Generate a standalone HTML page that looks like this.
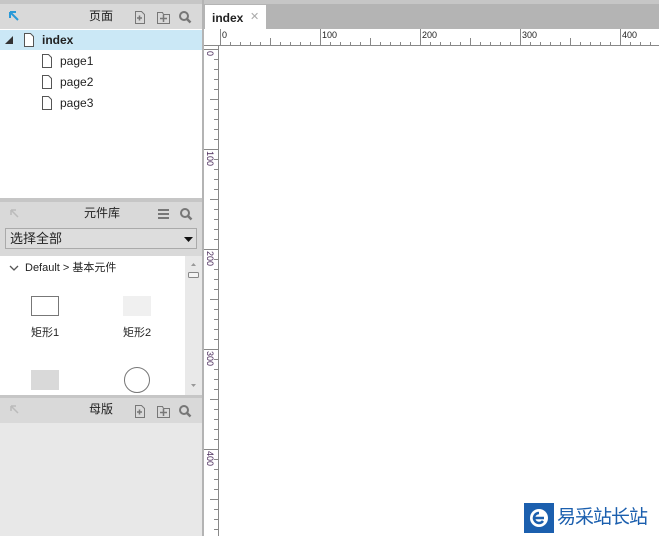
<!DOCTYPE html>
<html><head><meta charset="utf-8"><style>
*{margin:0;padding:0;box-sizing:border-box}
body{width:659px;height:536px;overflow:hidden;background:#fff;font-family:"Liberation Sans","Noto Sans CJK SC",sans-serif;font-size:12px;line-height:14px;color:#222;position:relative}
.a{position:absolute}
.hdr{background:#d9d9d9;height:25px}
.pg{position:absolute;font-size:12px}
</style></head><body>
<div class="a" style="left:0;top:0;width:659px;height:4px;background:#c6c6c6"></div>
<div class="a" style="left:0;top:4px;width:202px;height:532px;background:#fff"></div>
<div class="a hdr" style="left:0;top:4px;width:202px"></div>
<svg class="a" style="left:8px;top:10px" width="12" height="12"><path d="M2 2h6M2 2v6M2 2l8 8" stroke="#2a9ad8" stroke-width="2" fill="none"/></svg>
<div class="a" style="left:89px;top:9px;font-size:12px">页面</div>
<svg class="a" style="left:132px;top:9px" width="70" height="16">
<g stroke="#777" fill="none"><path d="M3.5 2.5h6l3 3v9h-9z"/><path d="M5 9h5M7.5 6.5v5" stroke-width="1.5"/>
<path d="M25.5 3.5h5l1 2h6v9h-12z"/><path d="M28 9.5h7M31.5 6v7" stroke-width="1.5"/>
<circle cx="52" cy="7" r="4" stroke-width="2"/><path d="M55 10l3.5 3.5" stroke-width="2.5"/></g></svg>
<div class="a" style="left:0;top:30px;width:202px;height:20px;background:#cbe8f6"></div>
<svg class="a" style="left:5px;top:35px" width="10" height="10"><path d="M8 1v8H0z" fill="#333"/></svg>
<svg class="a" style="left:23px;top:33px" width="12" height="14"><path d="M1.5 .5h6l3 3v10h-9z" fill="#fff" stroke="#555"/></svg>
<div class="a" style="left:42px;top:33px;font-size:12px;font-weight:bold">index</div>
<svg class="a" style="left:41px;top:54px" width="12" height="14"><path d="M1.5 .5h6l3 3v10h-9z" fill="#fff" stroke="#555"/></svg>
<div class="a pg" style="left:60px;top:54px">page1</div>
<svg class="a" style="left:41px;top:75px" width="12" height="14"><path d="M1.5 .5h6l3 3v10h-9z" fill="#fff" stroke="#555"/></svg>
<div class="a pg" style="left:60px;top:75px">page2</div>
<svg class="a" style="left:41px;top:96px" width="12" height="14"><path d="M1.5 .5h6l3 3v10h-9z" fill="#fff" stroke="#555"/></svg>
<div class="a pg" style="left:60px;top:96px">page3</div>
<div class="a" style="left:0;top:198px;width:202px;height:4px;background:#c6c6c6"></div>
<div class="a hdr" style="left:0;top:202px;width:202px;height:54px"></div>
<svg class="a" style="left:9px;top:208px" width="12" height="12"><path d="M2 2h5M2 2v5M2 2l7 7" stroke="#bbb" stroke-width="1.5" fill="none"/></svg>
<div class="a" style="left:84px;top:206px">元件库</div>
<svg class="a" style="left:155px;top:207px" width="40" height="16"><g stroke="#777" fill="none"><path d="M3 3h11M3 7h11M3 11h11" stroke-width="2"/><circle cx="30" cy="6" r="4" stroke-width="2"/><path d="M33 9l3.5 3.5" stroke-width="2.5"/></g></svg>
<div class="a" style="left:5px;top:228px;width:192px;height:21px;border:1px solid #aaa;background:#ddd"></div>
<div class="a" style="left:10px;top:231px;font-size:13px;line-height:15px">选择全部</div>
<svg class="a" style="left:184px;top:237px" width="9" height="6"><path d="M0 0h9L4.5 5z" fill="#111"/></svg>
<div class="a" style="left:0;top:256px;width:185px;height:140px;background:#fff"></div>
<div class="a" style="left:185px;top:256px;width:17px;height:140px;background:#e9e9e9"></div>
<svg class="a" style="left:188px;top:260px" width="11" height="130"><path d="M3 6l2.5-3 2.5 3z" fill="#999"/><rect x=".5" y="12.5" width="10" height="5" rx="1" fill="#f4f4f4" stroke="#888"/><path d="M3 124l2.5 3 2.5-3z" fill="#999"/></svg>
<svg class="a" style="left:9px;top:265px" width="10" height="8"><path d="M1 1l4 4 4-4" stroke="#555" stroke-width="1.3" fill="none"/></svg>
<div class="a" style="left:25px;top:261px;font-size:11px">Default &gt; 基本元件</div>
<div class="a" style="left:31px;top:296px;width:28px;height:20px;border:1px solid #777;background:#fff"></div>
<div class="a" style="left:123px;top:296px;width:28px;height:20px;background:#f0f0f0"></div>
<div class="a" style="left:31px;top:326px;font-size:11px">矩形1</div>
<div class="a" style="left:123px;top:326px;font-size:11px">矩形2</div>
<div class="a" style="left:31px;top:370px;width:28px;height:20px;background:#d9d9d9"></div>
<div class="a" style="left:124px;top:367px;width:26px;height:26px;border:1px solid #777;border-radius:50%;background:#fff"></div>
<div class="a" style="left:0;top:395px;width:202px;height:3px;background:#c6c6c6"></div>
<div class="a hdr" style="left:0;top:398px;width:202px"></div>
<svg class="a" style="left:9px;top:404px" width="12" height="12"><path d="M2 2h5M2 2v5M2 2l7 7" stroke="#bbb" stroke-width="1.5" fill="none"/></svg>
<div class="a" style="left:89px;top:402px">母版</div>
<svg class="a" style="left:132px;top:403px" width="70" height="16">
<g stroke="#777" fill="none"><path d="M3.5 2.5h6l3 3v9h-9z"/><path d="M5 9h5M7.5 6.5v5" stroke-width="1.5"/>
<path d="M25.5 3.5h5l1 2h6v9h-12z"/><path d="M28 9.5h7M31.5 6v7" stroke-width="1.5"/>
<circle cx="52" cy="7" r="4" stroke-width="2"/><path d="M55 10l3.5 3.5" stroke-width="2.5"/></g></svg>
<div class="a" style="left:0;top:423px;width:202px;height:113px;background:#e8e8e8"></div>
<div class="a" style="left:202px;top:0;width:2px;height:536px;background:#b4b4b4"></div>
<div class="a" style="left:204px;top:4px;width:455px;height:25px;background:#b4b4b4"></div>
<div class="a" style="left:205px;top:5px;width:61px;height:25px;background:#fff"></div>
<div class="a" style="left:212px;top:11px;font-size:12px;font-weight:bold;color:#222">index</div>
<div class="a" style="left:250px;top:10px;font-size:11px;color:#aaa">✕</div>
<svg class="a" style="left:204px;top:29px" width="455" height="507">
<rect x="0" y="0" width="455" height="17" fill="#fff"/>
<rect x="0" y="0" width="14" height="507" fill="#fff"/>
<g stroke="#888" stroke-width="1">
<path d="M0 16.5H455M14.5 17V507"/>
<path d="
M16.5 0v17M26.5 13v4M36.5 13v4M46.5 13v4M56.5 13v4M66.5 9v8M76.5 13v4M86.5 13v4M96.5 13v4M106.5 13v4
M116.5 0v17M126.5 13v4M136.5 13v4M146.5 13v4M156.5 13v4M166.5 9v8M176.5 13v4M186.5 13v4M196.5 13v4M206.5 13v4
M216.5 0v17M226.5 13v4M236.5 13v4M246.5 13v4M256.5 13v4M266.5 9v8M276.5 13v4M286.5 13v4M296.5 13v4M306.5 13v4
M316.5 0v17M326.5 13v4M336.5 13v4M346.5 13v4M356.5 13v4M366.5 9v8M376.5 13v4M386.5 13v4M396.5 13v4M406.5 13v4
M416.5 0v17M426.5 13v4M436.5 13v4M446.5 13v4"/>
<path d="
M0 20.5h14M10 30.5h4M10 40.5h4M10 50.5h4M10 60.5h4M6 70.5h8M10 80.5h4M10 90.5h4M10 100.5h4M10 110.5h4
M0 120.5h14M10 130.5h4M10 140.5h4M10 150.5h4M10 160.5h4M6 170.5h8M10 180.5h4M10 190.5h4M10 200.5h4M10 210.5h4
M0 220.5h14M10 230.5h4M10 240.5h4M10 250.5h4M10 260.5h4M6 270.5h8M10 280.5h4M10 290.5h4M10 300.5h4M10 310.5h4
M0 320.5h14M10 330.5h4M10 340.5h4M10 350.5h4M10 360.5h4M6 370.5h8M10 380.5h4M10 390.5h4M10 400.5h4M10 410.5h4
M0 420.5h14M10 430.5h4M10 440.5h4M10 450.5h4M10 460.5h4M6 470.5h8M10 480.5h4M10 490.5h4M10 500.5h4"/>
</g>
<g font-family="Liberation Sans" font-size="9" fill="#222">
<text x="18" y="9">0</text><text x="118" y="9">100</text><text x="218" y="9">200</text><text x="318" y="9">300</text><text x="418" y="9">400</text>
<g fill="#4a2a5a"><text transform="translate(3,22) rotate(90)">0</text><text transform="translate(3,122) rotate(90)">100</text><text transform="translate(3,222) rotate(90)">200</text><text transform="translate(3,322) rotate(90)">300</text><text transform="translate(3,422) rotate(90)">400</text></g>
</g>
</svg>
<div class="a" style="left:524px;top:503px;width:30px;height:30px;background:#1b5fae"></div>
<svg class="a" style="left:527px;top:506px" width="24" height="24"><circle cx="12" cy="12" r="9" fill="#fff"/><path d="M7 12h10M12 7a5 5 0 1 0 4 8" stroke="#1b5fae" stroke-width="2.5" fill="none"/></svg>
<div class="a" style="left:557px;top:505px;font-size:19px;color:#1b5fae;letter-spacing:-1px;font-family:'Noto Sans CJK SC',sans-serif;line-height:22px">易采站长站</div>
</body></html>
